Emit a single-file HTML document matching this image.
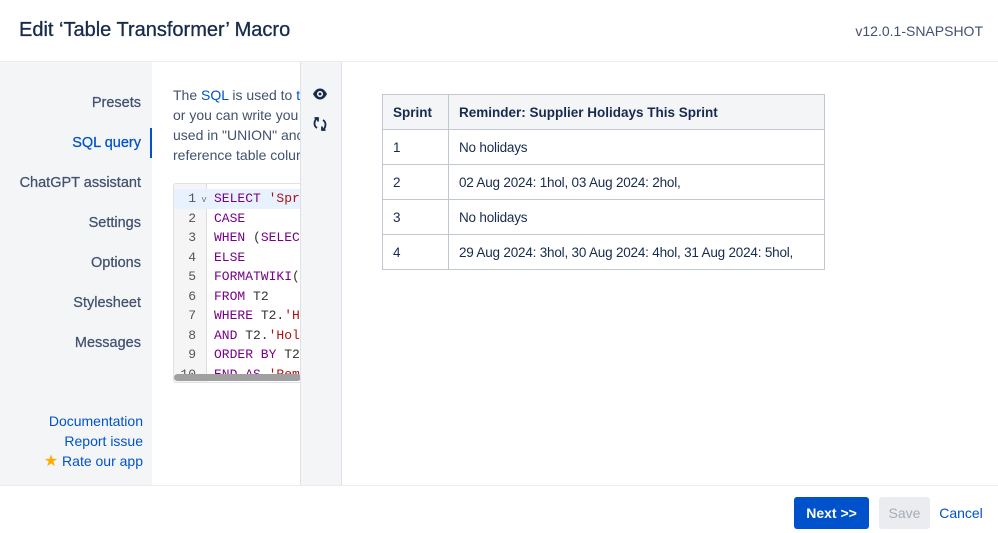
<!DOCTYPE html>
<html><head><style>
*{margin:0;padding:0;box-sizing:border-box}
body{width:998px;height:533px;overflow:hidden;font-family:"Liberation Sans",sans-serif;background:#fff;position:relative;color:#172b4d}
.hdr{position:absolute;top:0;left:0;right:0;height:62px;border-bottom:1px solid #ebecf0}
.hdr h1{position:absolute;left:19px;top:19px;font-size:20px;font-weight:normal;color:#172b4d;-webkit-text-stroke:0.3px #172b4d}
.hdr .v{position:absolute;right:15px;top:23px;font-size:14px;color:#42526e}
.nav{position:absolute;left:0;top:62px;width:152px;height:423px;background:#f4f5f7}
.nav .it{position:absolute;right:11px;font-size:14.5px;color:#42526e;-webkit-text-stroke:0.25px #42526e}
.nav .act{color:#0052cc;-webkit-text-stroke:0.25px #0052cc}
.bar{position:absolute;left:150px;top:128px;width:2px;height:30px;background:#0052cc}
.nav .links{position:absolute;right:9px;top:349px;text-align:right;font-size:14px;color:#0052cc;line-height:20px}
.desc{position:absolute;left:173px;top:85px;width:127px;overflow:hidden;white-space:nowrap;font-size:14px;line-height:20px;color:#42526e}
.desc a{color:#0052cc}
.code{position:absolute;left:173px;top:183px;width:127px;height:200px;border:1px solid #dfe1e6;border-right:none;border-radius:3px 0 0 3px;overflow:hidden;background:#fff}
.gut{position:absolute;left:0;top:0;width:33px;height:100%;background:#f5f5f5;border-right:1px solid #ddd}
.ln{position:absolute;left:0;width:127px;height:20px;font-family:"Liberation Mono",monospace;font-size:13px;line-height:20px;white-space:nowrap}
.ln .n{display:inline-block;width:22px;text-align:right;color:#555}
.ln .t{position:absolute;left:40px;color:#333}
.k{color:#770088}.s{color:#aa1111}
.scr{position:absolute;left:0;bottom:1px;width:127px;height:7px;background:#a0a0a0;border-radius:4px}
.tool{position:absolute;left:300px;top:62px;width:42px;height:423px;background:#f4f5f7;border-left:1px solid #dfe1e6;border-right:1px solid #dfe1e6}
table{position:absolute;left:382px;top:94px;border-collapse:collapse;font-size:13.5px;color:#172b4d;white-space:nowrap}
td,th{border:1px solid #c1c7d0;padding:0 10px;height:35px;text-align:left}
th{background:#f4f5f7;font-weight:bold}
td:last-child{letter-spacing:-0.2px}
.foot{position:absolute;top:485px;left:0;right:0;height:48px;border-top:1px solid #ebecf0}
.btn{position:absolute;top:11px;height:32px;border-radius:3px;font-size:14px;line-height:32px;text-align:center}
</style></head><body>
<div class="hdr"><h1>Edit ‘Table Transformer’ Macro</h1><div class="v">v12.0.1-SNAPSHOT</div></div>
<div class="nav">
<div class="it" style="top:33px">Presets</div>
<div class="it act" style="top:73px">SQL query</div>
<div class="it" style="top:113px">ChatGPT assistant</div>
<div class="it" style="top:153px">Settings</div>
<div class="it" style="top:193px">Options</div>
<div class="it" style="top:233px">Stylesheet</div>
<div class="it" style="top:273px">Messages</div>
<div class="links">Documentation<br>Report issue<br><span style="color:#ffab00;font-size:16px">★</span> Rate our app</div>
</div>
<div class="bar"></div>
<div class="desc">The <a>SQL</a> is used to <span style="color:#0052cc">tr</span><br>or you can write you<br>used in "UNION" anc<br>reference table colur</div>
<div class="code"><div class="gut"></div>
<div class="ln" style="top:5px;background:#e8f2ff"><span class="n">1</span><span style="font-size:9px;color:#777"> v</span><span class="t"><span class="k">SELECT</span> <span class="s">'Spr</span></span></div>
<div class="ln" style="top:24.5px"><span class="n">2</span><span class="t"><span class="k">CASE</span></span></div>
<div class="ln" style="top:44px"><span class="n">3</span><span class="t"><span class="k">WHEN</span> (<span class="k">SELEC</span></span></div>
<div class="ln" style="top:63.5px"><span class="n">4</span><span class="t"><span class="k">ELSE</span></span></div>
<div class="ln" style="top:83px"><span class="n">5</span><span class="t"><span class="k">FORMATWIKI</span>(</span></div>
<div class="ln" style="top:102.5px"><span class="n">6</span><span class="t"><span class="k">FROM</span> T2</span></div>
<div class="ln" style="top:122px"><span class="n">7</span><span class="t"><span class="k">WHERE</span> T2.<span class="s">'H</span></span></div>
<div class="ln" style="top:141.5px"><span class="n">8</span><span class="t"><span class="k">AND</span> T2.<span class="s">'Hol</span></span></div>
<div class="ln" style="top:161px"><span class="n">9</span><span class="t"><span class="k">ORDER BY</span> T2</span></div>
<div class="ln" style="top:180.5px"><span class="n">10</span><span class="t"><span class="k">END AS</span> <span class="s">'Rem</span></span></div>
<div class="scr"></div></div>
<div class="tool">
<svg style="position:absolute;left:11px;top:25px" width="16" height="14" viewBox="0 0 16 14"><path d="M1 7C3 3 5.5 1.5 8 1.5S13 3 15 7C13 11 10.5 12.5 8 12.5S3 11 1 7Z" fill="#172b4d"/><circle cx="8" cy="7" r="3" fill="#fff"/><circle cx="8" cy="7" r="1.5" fill="#172b4d"/></svg>
<svg style="position:absolute;left:12px;top:54px" width="14" height="16" viewBox="0 0 14 16" fill="none" stroke="#172b4d" stroke-width="1.8"><path d="M5 2C2.5 3 1.5 5 1.5 7.5c0 2 1 3.5 2.5 4.5"/><path d="M9 14c2.5-1 3.5-3 3.5-5.5 0-2-1-3.5-2.5-4.5"/><path d="M1.5 2H5v3.5M12.5 14H9v-3.5"/></svg>
</div>
<table>
<tr><th style="width:66px">Sprint</th><th style="width:376px">Reminder: Supplier Holidays This Sprint</th></tr>
<tr><td>1</td><td>No holidays</td></tr>
<tr><td>2</td><td>02 Aug 2024: 1hol, 03 Aug 2024: 2hol,</td></tr>
<tr><td>3</td><td>No holidays</td></tr>
<tr><td>4</td><td>29 Aug 2024: 3hol, 30 Aug 2024: 4hol, 31 Aug 2024: 5hol,</td></tr>
</table>
<div class="foot">
<div class="btn" style="left:794px;width:75px;background:#0052cc;color:#fff;font-weight:bold">Next &gt;&gt;</div>
<div class="btn" style="left:879px;width:51px;background:#ebecf0;color:#a5adba">Save</div>
<div class="btn" style="left:936px;width:50px;color:#0052cc">Cancel</div>
</div>
</body></html>
